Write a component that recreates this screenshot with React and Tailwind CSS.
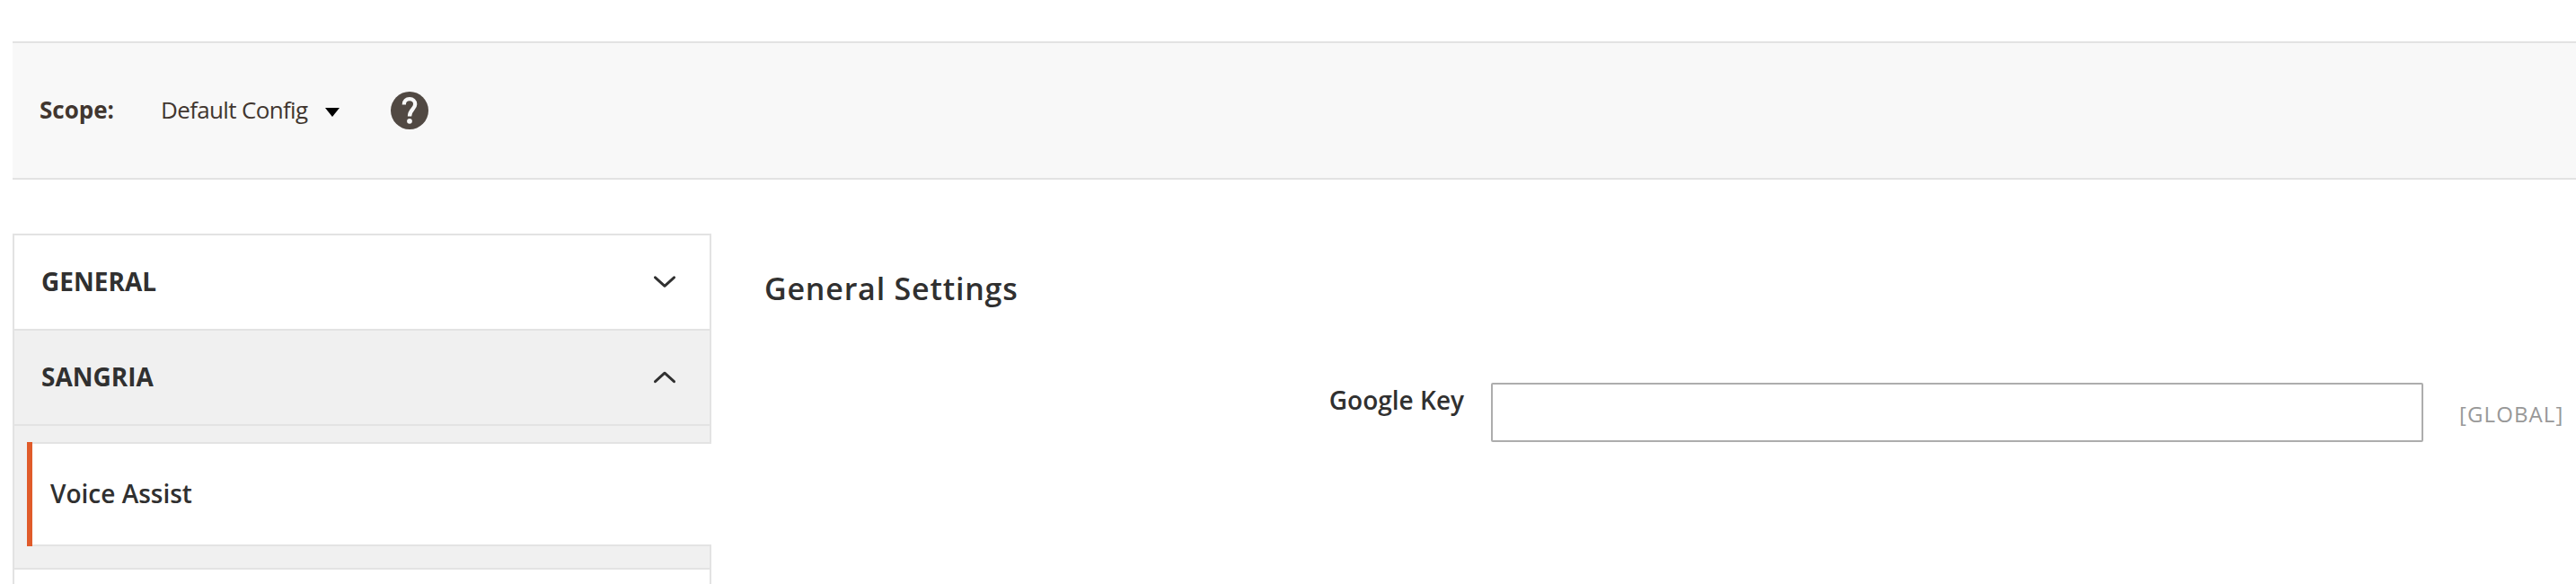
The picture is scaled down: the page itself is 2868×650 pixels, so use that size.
import React from "react";

function HelpIcon() {
  return (
    <svg className="ml-[57px] h-[42px] w-[42px] shrink-0" viewBox="0 0 42 42" fill="none">
      <circle cx="21" cy="21" r="21" fill="#514943" />
      <path
        d="M14.800 14.400C14.800 10.500 17.400 8.200 21 8.200C24.600 8.200 27.200 10.500 27.200 14C27.200 19.500 21 19.800 21 27.600"
        stroke="#f8f8f8"
        strokeWidth="4.300"
      />
      <circle cx="21" cy="32.800" r="2.900" fill="#f8f8f8" />
    </svg>
  );
}

function Chevron({ up }) {
  return (
    <svg className="mt-[2px] h-[14px] w-[24px]" viewBox="0 0 24 14" fill="none">
      <path
        d={up ? "M1.500 11.700 12 2.200 22.500 11.700" : "M1.500 1.800 12 11.300 22.500 1.800"}
        stroke="#303030"
        strokeWidth="2.900"
        strokeLinecap="round"
        strokeLinejoin="round"
      />
    </svg>
  );
}

function ScopeBar() {
  return (
    <section className="mt-[46px] ml-[14px] flex h-[154px] items-center border-y-2 border-[#e3e3e3] bg-[#f8f8f8] pb-px pl-[30px] text-[26px] leading-[40px] text-[#41362f]">
      <span className="-mt-px w-[135px] font-bold">Scope:</span>
      <button className="-mt-px flex items-center">
        <span className="w-[183px] text-left tracking-tight">Default Config</span>
        <svg className="mt-[5px] h-[10px] w-[16px]" viewBox="0 0 16 10">
          <path d="M0 0H16L8 10Z" fill="#000" />
        </svg>
      </button>
      <HelpIcon />
    </section>
  );
}

function Sidebar() {
  return (
    <nav className="h-[390px] w-[778px] shrink-0 text-[28px] leading-[40px] text-[#303030]">
      <div className="flex h-[108px] items-center justify-between border-2 border-[#e3e3e3] bg-white pr-[38px] pb-[2px] pl-[30px] font-bold">
        <span>GENERAL</span>
        <Chevron />
      </div>
      <div className="flex h-[106px] items-center justify-between border-x-2 border-b-2 border-[#e3e3e3] bg-[#f0f0f0] pr-[38px] pb-[2px] pl-[30px] font-bold">
        <span>SANGRIA</span>
        <Chevron up />
      </div>
      <div className="h-[18px] border-x-2 border-[#e3e3e3] bg-[#f0f0f0]" />
      <div className="flex h-[116px] border-l-2 border-[#e3e3e3] bg-[#f0f0f0] pl-[14px]">
        <div className="w-[6px] bg-[#e05b2a]" />
        <div className="flex flex-1 items-center border-y-2 border-[#e3e3e3] bg-white pb-[2px] pl-[20px] font-semibold">
          Voice Assist
        </div>
      </div>
      <div className="h-[26px] border-x-2 border-b-2 border-[#e3e3e3] bg-[#f0f0f0]" />
      <div className="h-[16px] border-x-2 border-[#e3e3e3] bg-white" />
    </nav>
  );
}

function Settings() {
  return (
    <main className="flex-1 text-[#303030]">
      <h2 className="mt-[41px] ml-[59px] text-[34px] leading-[40px] font-semibold tracking-[0.8px]">General Settings</h2>
      <div className="mt-[85px] flex items-start">
        <label htmlFor="google-key" className="-mt-px w-[838px] text-right text-[28px] leading-[40px] font-semibold">
          Google Key
        </label>
        <input id="google-key" className="ml-[30px] h-[66px] w-[1038px] rounded-[2px] border-2 border-[#adadad] bg-white px-4" />
        <span className="mt-[15px] ml-[40px] text-[24px] leading-[40px] tracking-[1.1px] text-[#989898]">[GLOBAL]</span>
      </div>
    </main>
  );
}

export default function App() {
  return (
    <div className="flex h-[650px] w-[2868px] flex-col overflow-hidden bg-white font-['Open_Sans',sans-serif]">
      <ScopeBar />
      <div className="mt-[60px] ml-[14px] flex">
        <Sidebar />
        <Settings />
      </div>
    </div>
  );
}
